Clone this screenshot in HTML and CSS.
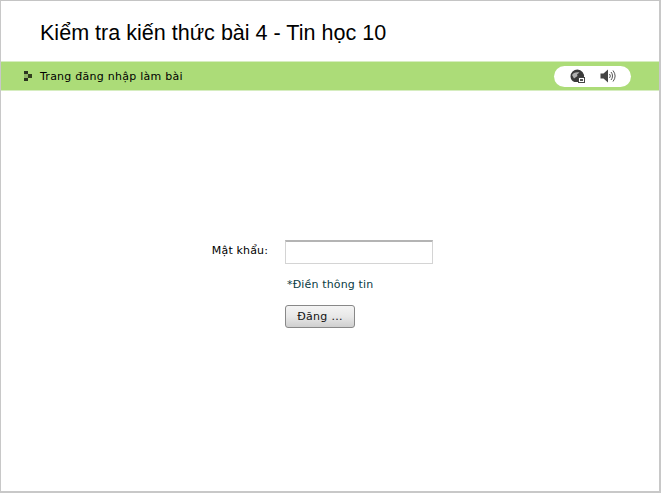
FILE: index.html
```html
<!DOCTYPE html>
<html lang="vi">
<head>
<meta charset="utf-8">
<title>Kiểm tra kiến thức bài 4 - Tin học 10</title>
<link rel="stylesheet" href="styles.css">
</head>
<body>
<div class="frame">
  <header class="title-row"><h1 class="title">Kiểm tra kiến thức bài 4 - Tin học 10</h1></header>
  <div class="bar">
    <div class="crumb">
      <svg class="bullet" width="8" height="10" viewBox="0 0 8 10" aria-hidden="true">
        <rect x="0" y="0" width="4" height="3" fill="#2a3320"/>
        <rect x="4" y="3" width="4" height="4" fill="#33401f"/>
        <rect x="0" y="7" width="4" height="3" fill="#2a3320"/>
        <rect x="0" y="3" width="4" height="4" fill="#8fb565"/>
      </svg>
      <span>Trang đăng nhập làm bài</span>
    </div>
    <div class="tools">
      <svg class="globe" width="16" height="15" viewBox="0 0 16 15" aria-hidden="true">
        <path d="M7.500 0.500a7 7 0 0 0-7 7c0 2.600 1.700 4.800 4 5.600h3.500V8.500h6A7 7 0 0 0 7.500 0.500z" fill="#3a3a3a"/>
        <path d="M2 6c1-2 4-3.500 7.500-2.500L7 5.500 7.500 7 4 9.500z" fill="#b0b0b0"/>
        <rect x="8.500" y="8.500" width="6" height="5" fill="#fff" stroke="#444"/>
        <rect x="10" y="10" width="3" height="2" fill="#555"/>
      </svg>
      <svg class="speaker" width="16" height="16" viewBox="0 0 16 16" aria-hidden="true">
        <path d="M0.500 5.500h3L8 1.500v13L3.500 10.500h-3z" fill="#444"/>
        <path d="M9.500 6a3 3 0 0 1 0 4M11 4a6 6 0 0 1 0 8M13 2.500a9 9 0 0 1 0 11" fill="none" stroke="#555" stroke-width="1"/>
      </svg>
    </div>
  </div>
  <main class="login">
    <form class="form">
      <label class="label" for="pw">Mật khẩu:</label>
      <input class="input" id="pw" type="password">
      <p class="hint">*Điền thông tin</p>
      <button class="btn" type="button">Đăng ...</button>
    </form>
  </main>
</div>
</body>
</html>
```
FILE: styles.css
```css
html, body { margin: 0; padding: 0; background: #fff; }
body { width: 662px; height: 496px; overflow: hidden; font-family: "DejaVu Sans", sans-serif; font-size: 11px; letter-spacing: 0.15px; color: #000; }
.frame { box-sizing: border-box; width: 661px; height: 493px; border-top: 1px solid #c4c4c4; border-left: 1px solid #c8c8c8; border-right: 2px solid #c8c8c8; border-bottom: 2px solid #c8c8c8; display: flex; flex-direction: column; background: #fff; }
.title-row { box-sizing: border-box; height: 60px; padding: 3px 0 0 39px; display: flex; align-items: center; }
.title { margin: 0; font: 400 21.55px "Liberation Sans", sans-serif; letter-spacing: 0; color: #000; }
.bar { box-sizing: content-box; height: 28px; padding: 0 28px 0 23px; display: flex; align-items: center; justify-content: space-between; background: #acdc78; border-top: 1px solid #d6edc0; border-bottom: 1px solid #d6edc0; }
.crumb { display: flex; align-items: center; gap: 8px; letter-spacing: 0.25px; }
.bullet { display: block; }
.tools { width: 77px; height: 21px; border-radius: 11px; background: #fff; display: flex; align-items: center; justify-content: center; gap: 14px; }
.globe { display: block; }
.speaker { display: block; }
.login { flex: 1; display: flex; }
.form { display: grid; grid-template-columns: 68px 148px; column-gap: 17px; margin: 149px 0 0 199px; align-content: start; }
.label { text-align: right; padding-top: 4px; align-self: start; }
.input { box-sizing: border-box; width: 148px; height: 24px; margin: 0; padding: 2px 4px; background: #fff; border: 1px solid #d4d4d4; border-top: 2px solid #b4b4b4; outline: none; }
.hint { grid-column: 2; margin: 13px 0 0 2px; color: #0a3c44; line-height: 16px; }
.btn { grid-column: 2; width: 70px; height: 23px; margin-top: 12px; padding: 0; font: inherit; letter-spacing: 0.3px; color: #111; border: 1px solid #888; border-radius: 3px; background: linear-gradient(#f4f4f4, #e8e8e8 50%, #cfcfcf); }
```
